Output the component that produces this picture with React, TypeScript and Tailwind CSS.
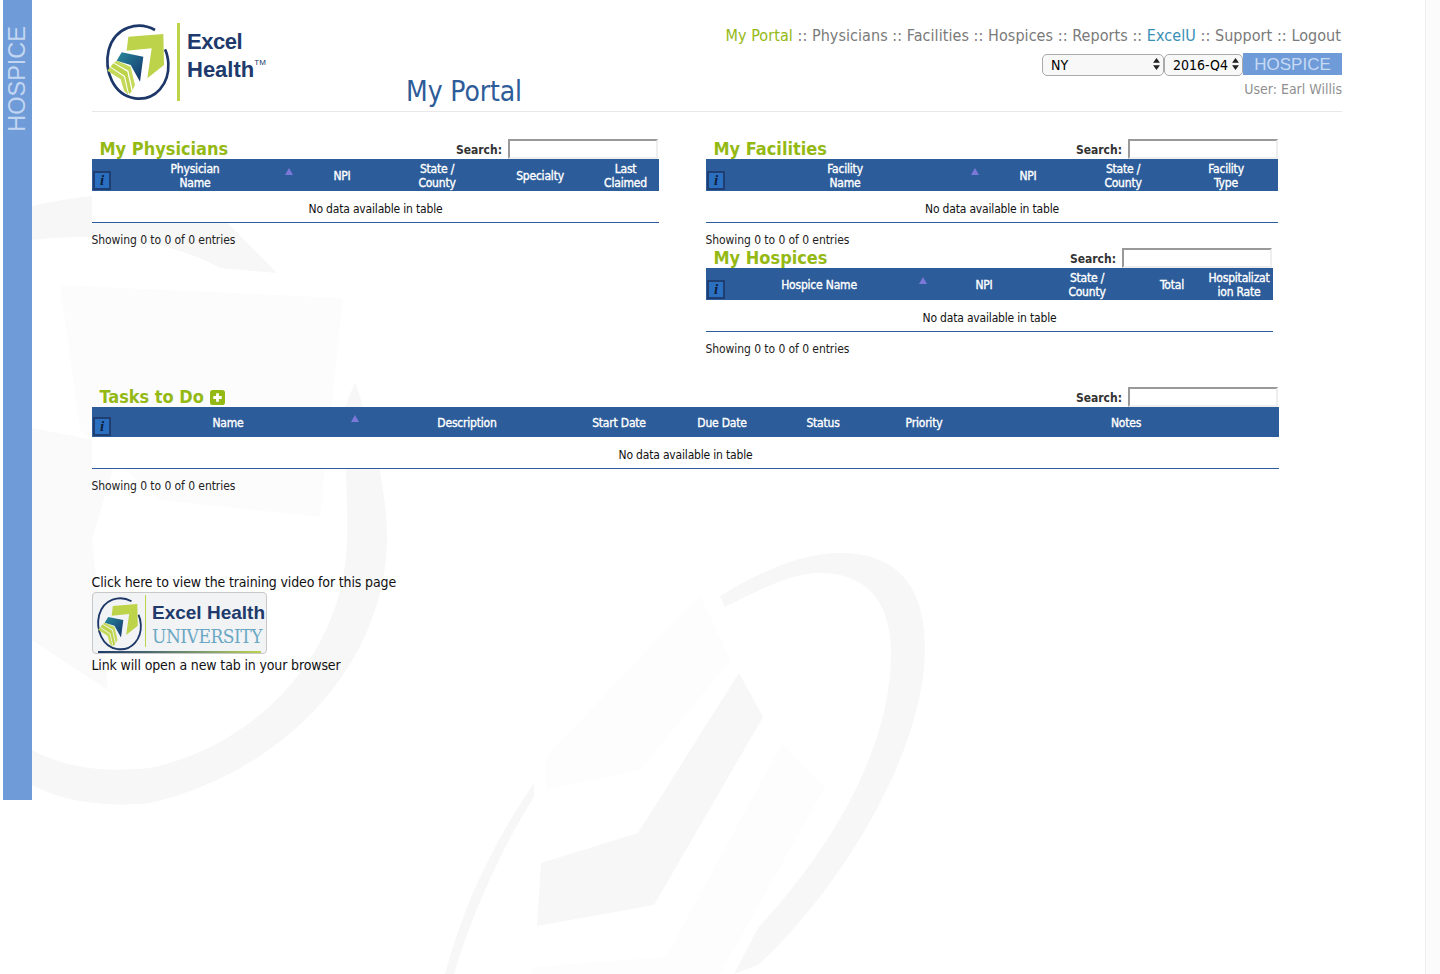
import React from "react";

const FONT = "font-['DejaVu_Sans_Condensed','Noto_Sans',sans-serif]";

function LogoMark({ className, id }: { className: string; id: string }) {
  return (
    <svg viewBox="0 0 240 255" className={className}>
      <defs>
        <linearGradient id={id} x1="0" y1="0" x2="1" y2="1">
          <stop offset="0" stopColor="#2a8a9c" />
          <stop offset="1" stopColor="#12316b" />
        </linearGradient>
      </defs>
      <path d="M165 30C115 2 45 20 26 90C12 150 38 225 105 235C168 243 208 190 205 130C204 115 201 100 195 88" fill="none" stroke="#1c3768" strokeWidth="8" />
      <path d="M85 50L190 42L192 135L142 175L155 85L80 92Z" fill="#bcd34a" />
      <path d="M50 122L65 97L130 110L120 185L92 135Z" fill={`url(#${id})`} />
      <path d="M22 152L30 142L72 170L85 225L72 212L62 178Z" fill="#c5d95a" />
      <path d="M32 140L40 130L82 155L95 215L87 222L75 168Z" fill="#bcd34a" />
      <path d="M42 128L50 122L92 140L105 195L98 210L85 152Z" fill="#c5d95a" />
    </svg>
  );
}

function Info() {
  return (
    <span className="absolute left-[1px] bottom-[1px] flex h-[19px] w-[18px] items-center justify-center border-2 border-[#1f3f72] bg-[#2b6fc0] font-['Liberation_Serif',serif] text-[15px] font-bold italic leading-none text-[#10203c]">
      i
    </span>
  );
}

function Sort({ top }: { top: string }) {
  return (
    <svg viewBox="0 0 8 7" className={`absolute right-[5px] h-[7px] w-[8px] ${top}`}>
      <path d="M4 0L8 7H0Z" fill="#7b78d8" />
    </svg>
  );
}

type Col = { label: React.ReactNode; w: string; sort?: boolean };

function DataTable({
  title,
  cols,
  width,
  headH,
  searchEnd,
  arrowTop,
  plus,
}: {
  title: string;
  cols: Col[];
  width: string;
  headH: string;
  searchEnd: string;
  arrowTop: string;
  plus?: boolean;
}) {
  return (
    <div className={width}>
      <div className="flex h-[20px] items-end justify-between">
        <div className="ml-[7.5px] flex items-center gap-[6px] text-[18px] font-bold leading-[20px] text-[#94b914]">
          {title}
          {plus && (
            <svg viewBox="0 0 16 16" className="h-[15px] w-[15px]">
              <rect width="16" height="16" rx="3" fill="#94b914" />
              <path d="M8 3.500V12.500M3.500 8H12.500" stroke="#fff" strokeWidth="3" />
            </svg>
          )}
        </div>
        <div className={`flex items-center ${searchEnd}`}>
          <span className="mr-[6px] pt-[2px] text-[12px] font-bold text-[#333]">Search:</span>
          <input className="h-[20px] w-[150px] border-2 border-t-[#999] border-l-[#999] border-r-[#eee] border-b-[#eee] bg-white" />
        </div>
      </div>
      <div className={`relative flex bg-[#2c5c9a] ${headH}`}>
        {cols.map((c, i) => (
          <div key={i} className={`relative flex items-center justify-center pt-[2px] text-center text-[12px] leading-[14px] text-white ${c.w}`}>
            <span className="tracking-[-0.2px] [-webkit-text-stroke:0.35px_white]">{c.label}</span>
            {c.sort && <Sort top={arrowTop} />}
          </div>
        ))}
        <Info />
      </div>
      <div className="flex h-[32px] items-center justify-center border-b border-[#2c5c9a] bg-white pt-[5px] text-[12px] tracking-[-0.18px] text-[#111]">
        No data available in table
      </div>
      <div className="-ml-[0.5px] mt-[9px] h-[16px] text-[12px] leading-[16px] tracking-[-0.07px] text-[#222]">Showing 0 to 0 of 0 entries</div>
    </div>
  );
}

function Watermark() {
  return (
    <svg viewBox="0 0 1440 974" className="absolute inset-0 h-[974px] w-[1440px]">
      <g fill="#f7f7f7">
        <path d="M32 206C100 190 170 190 220 215L277 273L220 268C170 240 100 232 32 240Z" />
        <path d="M355 382C375 440 387 490 387 540C385 660 290 770 150 803C100 808 60 800 32 785V750C70 770 110 772 150 768C260 745 345 650 347 540C348 490 345 440 340 420Z" />
        <path d="M32 428L120 445L92 540L108 690L32 640Z" fill="#fafafa" />
        <path d="M60 285L343 298L320 517L160 500L80 430Z" fill="#fcfcfc" />
        <path d="M739 673L763 717L654 905L537 926L541 863L638 833Z" />
        <path d="M720 596C760 572 800 553 841 553C900 553 925 590 925 647C925 760 830 900 758 965L734 974L758 928C830 850 891 750 891 653C891 600 865 573 820 573C790 573 760 590 725 607Z" />
        <path d="M534 783V797C500 850 470 920 454 974H445C465 900 495 840 534 783Z" />
        <path d="M670 633L648 663L589 723L568 735Z" />
        <path d="M546 757L700 595L730 660L640 770L546 790Z" fill="#fdfdfd" />
        <path d="M782 743L825 787L720 974H532V967L666 957Z" fill="#fdfdfd" />
      </g>
    </svg>
  );
}

function Selects() {
  const arrows = (
    <svg viewBox="0 0 8 14" className="pointer-events-none absolute right-[4px] top-[5px] h-[12px] w-[7px]">
      <path d="M4 0L8 5.500H0ZM4 14L0 8.500H8Z" fill="#222" />
    </svg>
  );
  return (
    <div className="flex h-[22px] items-stretch justify-end">
      <div className="relative w-[122px]">
        <select defaultValue="NY" className="h-full w-full appearance-none rounded-[5px] border border-[#aaa] bg-[#f8f8f8] pb-[4px] pl-[8px] text-[14px] text-black">
          <option>NY</option>
        </select>
        {arrows}
      </div>
      <div className="relative w-[79px]">
        <select defaultValue="2016-Q4" className="h-full w-full appearance-none rounded-[5px] border border-[#aaa] bg-[#f8f8f8] pb-[4px] pl-[8px] text-[14px] text-black">
          <option>2016-Q4</option>
        </select>
        {arrows}
      </div>
      <div className="flex w-[99px] items-center justify-center bg-[#6f9bd8] font-['Liberation_Sans',sans-serif] text-[17px] leading-none text-[#c6daf4]">HOSPICE</div>
    </div>
  );
}

function Nav() {
  const items: [string, string][] = [
    ["My Portal", "text-[#94b914]"],
    ["Physicians", ""],
    ["Facilities", ""],
    ["Hospices", ""],
    ["Reports", ""],
    ["ExcelU", "text-[#3a8fb5]"],
    ["Support", ""],
    ["Logout", ""],
  ];
  return (
    <div className="mr-[1px] whitespace-pre text-[16px] leading-[24px] tracking-[0.06px] text-[#7a7a7a]">
      {items.map(([t, c], i) => (
        <React.Fragment key={t}>
          {i > 0 && " :: "}
          <a className={c}>{t}</a>
        </React.Fragment>
      ))}
    </div>
  );
}

export default function App() {
  const phys: Col[] = [
    { label: <>Physician<br />Name</>, w: "w-[206px]", sort: true },
    { label: "NPI", w: "w-[88px]" },
    { label: <>State /<br />County</>, w: "w-[102px]" },
    { label: "Specialty", w: "w-[104px]" },
    { label: <>Last<br />Claimed</>, w: "w-[67px]" },
  ];
  const fac: Col[] = [
    { label: <>Facility<br />Name</>, w: "w-[278px]", sort: true },
    { label: "NPI", w: "w-[88px]" },
    { label: <>State /<br />County</>, w: "w-[102px]" },
    { label: <>Facility<br />Type</>, w: "w-[104px]" },
  ];
  const hosp: Col[] = [
    { label: "Hospice Name", w: "w-[226px]", sort: true },
    { label: "NPI", w: "w-[104px]" },
    { label: <>State /<br />County</>, w: "w-[102px]" },
    { label: "Total", w: "w-[68px]" },
    { label: <>Hospitalizat<br />ion Rate</>, w: "w-[66px]" },
  ];
  const tasks: Col[] = [
    { label: "Name", w: "w-[272px]", sort: true },
    { label: "Description", w: "w-[206px]" },
    { label: "Start Date", w: "w-[98px]" },
    { label: "Due Date", w: "w-[108px]" },
    { label: "Status", w: "w-[94px]" },
    { label: "Priority", w: "w-[108px]" },
    { label: "Notes", w: "w-[296px]" },
  ];
  return (
    <div className={`relative flex h-[974px] overflow-hidden bg-white pl-[3px] ${FONT}`}>
      <Watermark />
      <aside className="relative flex h-[800px] w-[29px] shrink-0 justify-center bg-[#6f9bd8] pl-[1px] pt-[26px]">
        <div className="h-fit rotate-180 font-['Liberation_Sans',sans-serif] text-[23.5px] leading-none text-[#c2d6f1] [writing-mode:vertical-rl]">HOSPICE</div>
      </aside>
      <main className="relative ml-[60px] w-[1250px] shrink-0">
        <header className="flex h-[112px] border-b border-[#e8e8e8]">
          <div className="flex w-[314px] shrink-0 items-start pl-[8px] pt-[20px]">
            <LogoMark id="tealA" className="h-[85px] w-[80px] shrink-0" />
            <div className="-ml-[3px] mt-[3px] h-[78px] w-[3px] shrink-0 bg-[#bcd34a]" />
            <div className="ml-[7px] mt-[8px] font-['Liberation_Sans',sans-serif] text-[22px] font-bold leading-[28px] text-[#203a6c]">
              <div className="tracking-[-0.5px]">Excel</div>
              <div>Health<sup className="align-[8px] text-[8px] font-normal">TM</sup></div>
            </div>
          </div>
          <h1 className="mt-[73px] text-[28px] font-normal leading-[38px] tracking-[-0.1px] text-[#2e5c99]">My Portal</h1>
          <div className="ml-auto pt-[24px] text-right">
            <Nav />
            <div className="mt-[5px]"><Selects /></div>
            <div className="mt-[4px] text-[14px] leading-[20px] text-[#8f8f8f]">User: Earl Willis</div>
          </div>
        </header>
        <div className="mt-[27px] flex items-start">
          <DataTable title="My Physicians" cols={phys} width="w-[567px]" headH="h-[32px]" searchEnd="mr-[1px]" arrowTop="top-[9px]" />
          <div className="ml-[47px] w-[572px]">
            <DataTable title="My Facilities" cols={fac} width="w-[572px]" headH="h-[32px]" searchEnd="" arrowTop="top-[9px]" />
            <DataTable title="My Hospices" cols={hosp} width="w-[567px]" headH="h-[32px]" searchEnd="mr-[1px]" arrowTop="top-[9px]" />
          </div>
        </div>
        <div className="mt-[30px]">
          <DataTable title="Tasks to Do" plus cols={tasks} width="w-[1187px]" headH="h-[30px]" searchEnd="mr-[1px]" arrowTop="top-[8px]" />
        </div>
        <div className="-ml-[0.5px] mt-[79px] text-[14px] leading-[18px] tracking-[-0.14px] text-[#111]">
          <p>Click here to view the training video for this page</p>
          <div className="relative ml-[0.5px] mt-[1px] flex h-[62px] w-[175px] items-start overflow-hidden rounded-[4px] border border-[#c8c8c8] bg-[#f2f3f5]">
            <LogoMark id="tealB" className="mt-[1px] h-[60px] w-[56px] shrink-0" />
            <div className="-ml-[4px] mt-[2px] h-[52px] w-[1px] shrink-0 bg-[#bcd34a]" />
            <div className="ml-[6px] mt-[8px] whitespace-nowrap tracking-normal">
              <div className="font-['Liberation_Sans',sans-serif] text-[19px] font-bold leading-[23px] text-[#203a6c]">Excel Health</div>
              <div className="font-['DejaVu_Serif_Condensed','DejaVu_Serif',serif] text-[19px] leading-[24px] tracking-[-0.5px] text-[#6aa8c4]">UNIVERSITY</div>
            </div>
            <div className="absolute bottom-0 left-[5px] right-[5px] h-[2px] bg-gradient-to-r from-[#203a6c] to-[#bcd34a]" />
          </div>
          <p className="mt-[2px]">Link will open a new tab in your browser</p>
        </div>
      </main>
      <div className="absolute bottom-0 right-0 top-0 w-[15px] border-l border-[#eeeeee] bg-[#fbfbfb]" />
    </div>
  );
}
